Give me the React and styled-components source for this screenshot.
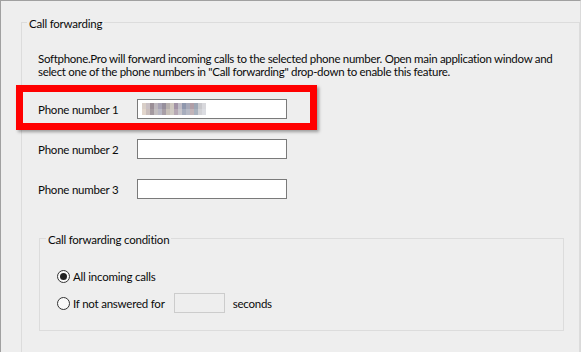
import React from "react";
import styled, { createGlobalStyle } from "styled-components";

const GlobalStyle = createGlobalStyle`
  html, body {
    margin: 0;
    padding: 0;
    background: #eeeeee;
  }
  body {
    font-family: Lato, "Liberation Sans", sans-serif;
    font-size: 11.5px;
    letter-spacing: -0.22px;
    color: #0a0a0a;
  }
`;

const Window = styled.div`
  position: relative;
  box-sizing: border-box;
  width: 581px;
  height: 352px;
  overflow: hidden;
  background: #eeeeee;
  border-top: 1px solid #a0a0a0;
  border-left: 1px solid #a0a0a0;
  border-right: 1px solid #dadada;
`;

const Group = styled.fieldset`
  box-sizing: border-box;
  margin: ${(props) => (props.inner ? "30px 0 0 1px" : "12px 0 0 20px")};
  padding: ${(props) => (props.inner ? "0 0 17px 17px" : "0 0 40px 16px")};
  width: ${(props) => (props.inner ? "525px" : "559px")};
  border: 1px solid #dcdcdc;
  min-width: 0;
`;

const Legend = styled.legend`
  margin-left: -11px;
  padding: 3px 2px 0;
  line-height: 16px;
`;

const Intro = styled.p`
  margin: 20px 0 0;
  line-height: 13px;
  letter-spacing: -0.3px;
  white-space: nowrap;
`;

const Rows = styled.div`
  display: grid;
  grid-template-columns: 99px 150px;
  row-gap: 20px;
  margin-top: 21px;
`;

const Label = styled.label`
  display: flex;
  align-items: center;
  height: 20px;
`;

const TextBox = styled.div`
  box-sizing: border-box;
  display: flex;
  align-items: center;
  width: ${(props) => (props.small ? "51px" : "150px")};
  height: 20px;
  padding-left: 4px;
  background: ${(props) => (props.disabled ? "#eeeeee" : "#ffffff")};
  border: 1px solid ${(props) => (props.disabled ? "#cccccc" : "#7a7a7a")};
`;

const Options = styled.div`
  display: flex;
  flex-direction: column;
  gap: 7px;
  margin-top: 18px;
`;

const Option = styled.div`
  display: flex;
  align-items: center;
  height: 20px;
  gap: 3px;
`;

const Radio = styled.span`
  box-sizing: border-box;
  display: flex;
  align-items: center;
  justify-content: center;
  width: 13px;
  height: 13px;
  border-radius: 50%;
  border: 1px solid #333;
  background: #fafafa;

  &::after {
    content: "";
    display: ${(props) => (props.checked ? "block" : "none")};
    width: 7px;
    height: 7px;
    border-radius: 50%;
    background: #222;
  }
`;

const Seconds = styled.span`
  margin: 0 5px 0 6px;
  display: flex;
`;

const Highlight = styled.div`
  position: absolute;
  left: 15px;
  top: 84px;
  box-sizing: border-box;
  width: 301px;
  height: 45px;
  border: 7px solid #ff0000;
  box-shadow: 2px 2px 3px rgba(0, 0, 0, 0.35);
  pointer-events: none;
`;

const mosaic = [
  ["#d9cfc8", "#c9c0c4", "#9a8e96", "#bdb7bd", "#a8a3b4", "#968f9c", "#b7b0ae", "#cfc8c0", "#a293a6", "#c0bcc6", "#8f97ad", "#a7a8b8", "#b19ea6", "#9ea6b4", "#c8c8cc", "#d8d8dc"],
  ["#e2d6cc", "#cbbfbd", "#a49aa0", "#c4bfc0", "#b9b8c4", "#a89ea6", "#c8c0b8", "#d0cbc4", "#b6a8b4", "#c8c6cc", "#a7adbd", "#b7bac6", "#c3b4b8", "#aab2be", "#d2d2d6", "#dcdde2"],
];

const Blurred = () => (
  <svg width="64" height="12" viewBox="0 0 64 12">
    {mosaic.map((row, r) =>
      row.map((c, i) => (
        <rect key={`${r}-${i}`} x={i * 4} y={r * 6} width="4" height="6" fill={c} />
      ))
    )}
  </svg>
);

export default function App() {
  return (
    <>
      <GlobalStyle />
      <Window>
        <Group>
          <Legend>Call forwarding</Legend>
          <Intro>
            Softphone.Pro will forward incoming calls to the selected phone number. Open main application window and
            <br />
            select one of the phone numbers in "Call forwarding" drop-down to enable this feature.
          </Intro>
          <Rows>
            <Label>Phone number 1</Label>
            <TextBox>
              <Blurred />
            </TextBox>
            <Label>Phone number 2</Label>
            <TextBox />
            <Label>Phone number 3</Label>
            <TextBox />
          </Rows>
          <Group inner>
            <Legend>Call forwarding condition</Legend>
            <Options>
              <Option>
                <Radio checked />
                All incoming calls
              </Option>
              <Option>
                <Radio />
                If not answered for
                <Seconds>
                  <TextBox small disabled />
                </Seconds>
                seconds
              </Option>
            </Options>
          </Group>
        </Group>
        <Highlight />
      </Window>
    </>
  );
}
